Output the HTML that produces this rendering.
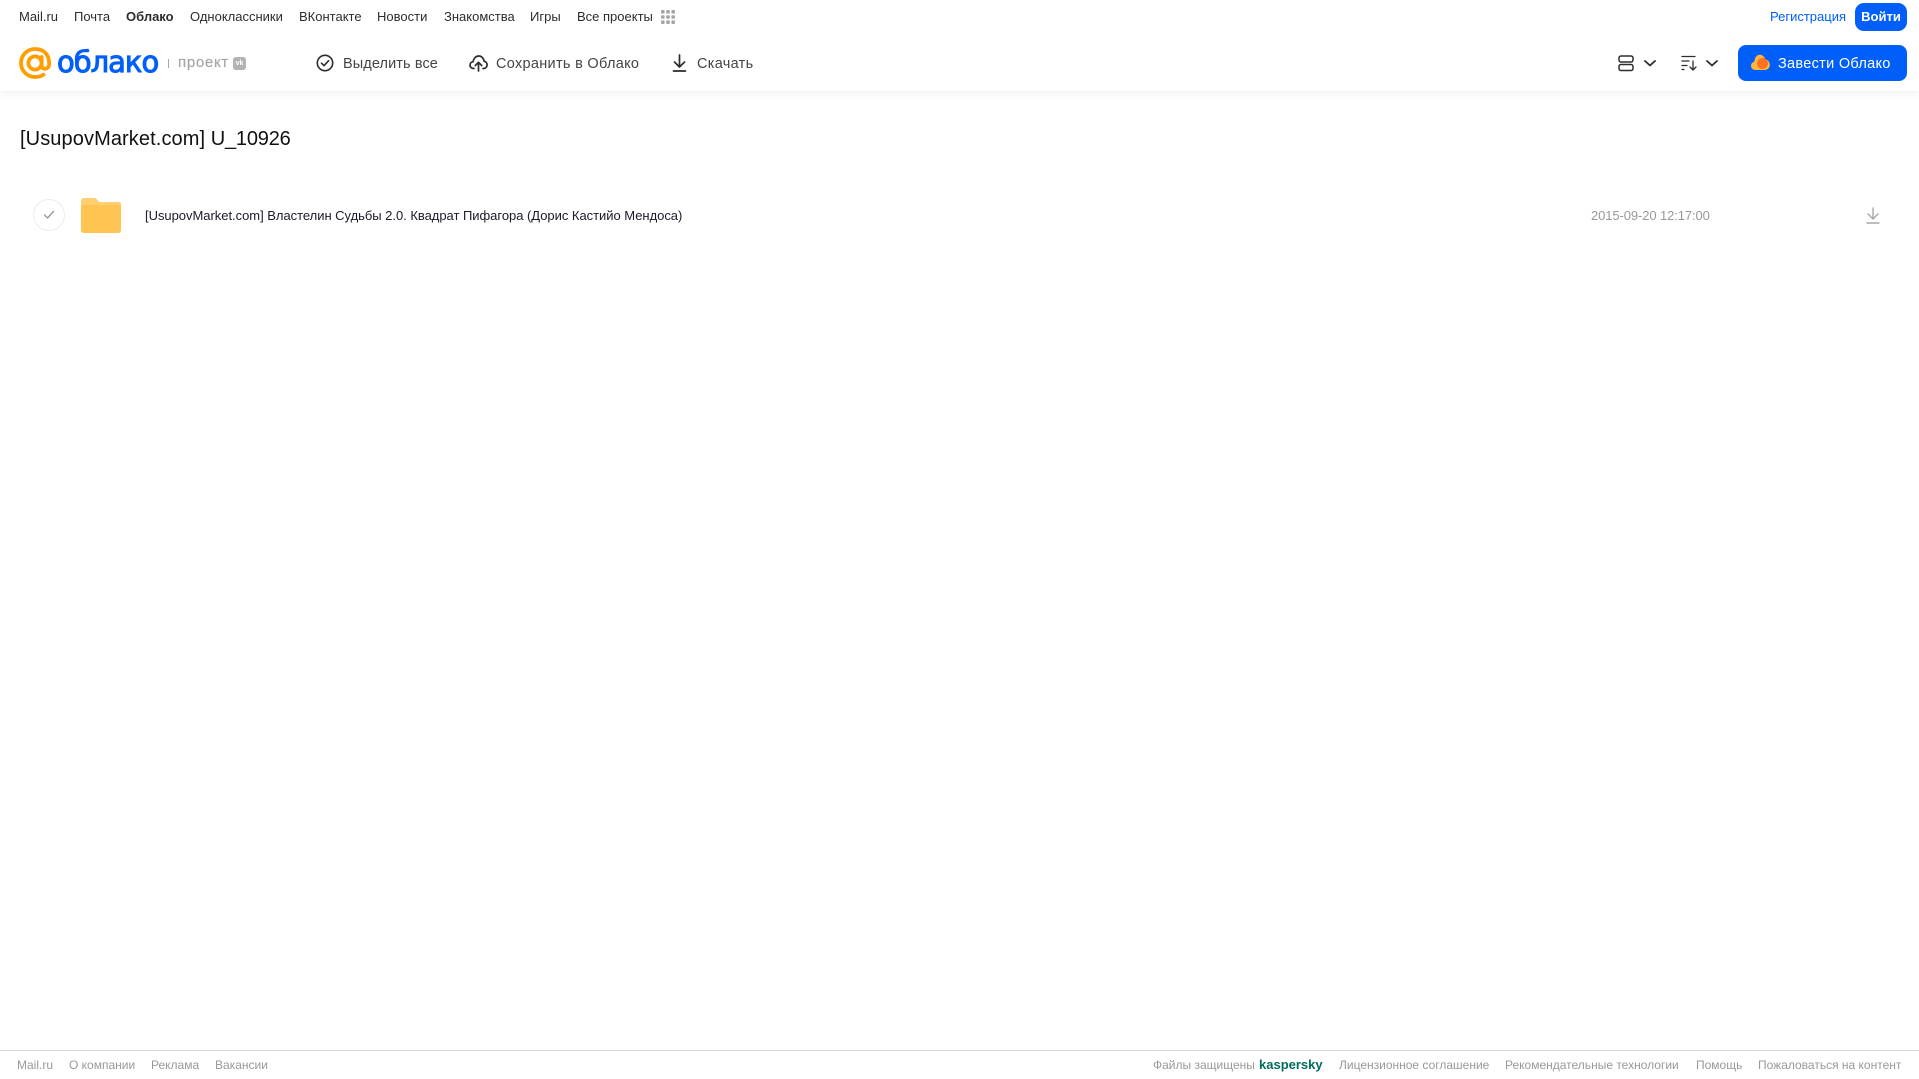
<!DOCTYPE html>
<html lang="ru"><head><meta charset="utf-8"><title>Облако</title>
<style>
html,body{margin:0;padding:0;background:#fff;width:1919px;height:1079px;overflow:hidden}
body{position:relative;font-family:"Liberation Sans",Arial,sans-serif}
.t{position:absolute;white-space:nowrap;line-height:20px;transform-origin:left center}
.n{font-size:13px;color:#2c2d2e;top:7px}
.h{font-size:14.5px;color:#444;top:54px;letter-spacing:.3px}
.f{font-size:12px;color:#999;top:1055px}
svg{position:absolute;overflow:visible}
</style></head><body>
<div style="position:absolute;left:0;top:0;width:1919px;height:91px;background:#fff;box-shadow:0 2px 8px rgba(0,0,0,.07)"></div>

<span class="t n" style="left:19px">Mail.ru</span>
<span class="t n" style="left:74px">Почта</span>
<span class="t n" style="left:126px;font-weight:bold">Облако</span>
<span class="t n" style="left:190px">Одноклассники</span>
<span class="t n" style="left:299px">ВКонтакте</span>
<span class="t n" style="left:377px">Новости</span>
<span class="t n" style="left:444px">Знакомства</span>
<span class="t n" style="left:530px">Игры</span>
<span class="t n" style="left:577px">Все проекты</span>
<svg style="left:661px;top:10px" width="14" height="14" fill="#a5a5a5"><rect x="0" y="0" width="3.6" height="3.6" rx="1"/><rect x="5.2" y="0" width="3.6" height="3.6" rx="1"/><rect x="10.4" y="0" width="3.6" height="3.6" rx="1"/><rect x="0" y="5.2" width="3.6" height="3.6" rx="1"/><rect x="5.2" y="5.2" width="3.6" height="3.6" rx="1"/><rect x="10.4" y="5.2" width="3.6" height="3.6" rx="1"/><rect x="0" y="10.4" width="3.6" height="3.6" rx="1"/><rect x="5.2" y="10.4" width="3.6" height="3.6" rx="1"/><rect x="10.4" y="10.4" width="3.6" height="3.6" rx="1"/></svg>

<svg style="left:19px;top:47px" width="33" height="33" fill="none" stroke="#ff9e00" stroke-width="3.8"><circle cx="16" cy="16" r="6.6"/><path d="M22.6 10v8.500c0 4.600 7.600 4.600 7.600-1.500C30.200 7.500 25 2 16 2 8 2 2 8.500 2 16s6 14 14 14c3.500 0 6.200-.8 8.500-2.300" stroke-linecap="round"/></svg>
<span class="t" style="left:57px;top:48px;font-size:29px;line-height:28px;font-family:'DejaVu Sans',sans-serif;color:#005ff9;-webkit-text-stroke:1px #005ff9;letter-spacing:-1px">облако</span>
<div style="position:absolute;left:168px;top:59px;width:1px;height:9px;background:#aaa"></div>
<span class="t" style="left:178px;top:53px;font-size:15px;color:#a6a6a6;letter-spacing:.7px;-webkit-text-stroke:.2px #a6a6a6">проект</span>
<div style="position:absolute;left:233px;top:57px;width:13px;height:13px;border-radius:3px;background:#b3b3b3;color:#fff;font-size:7px;line-height:13px;text-align:center;font-weight:bold">vk</div>

<svg style="left:316px;top:54px" width="18" height="18" fill="none" stroke="#2c2d2e" stroke-width="1.600"><circle cx="9" cy="9" r="7.700"/><path d="M5.500 9.200l2.500 2.500 4.600-5" stroke-linecap="round" stroke-linejoin="round"/></svg>
<span class="t h" style="left:343px;letter-spacing:.1px">Выделить все</span>
<svg style="left:469px;top:54px" width="19" height="18" fill="none" stroke="#2c2d2e" stroke-width="1.700" stroke-linecap="round" stroke-linejoin="round"><path d="M5 14.500H4.500C2.500 14.500 1 13 1 11.200 1 9.300 2.300 8 4 7.800 4.500 4.500 6.800 2 9.700 2c2.900 0 5 2.200 5.400 5.300 1.800.3 3 1.900 3 3.700 0 1.900-1.500 3.500-3.500 3.500H14"/><path d="M9.500 17V8.500M6.300 11.500l3.200-3.200 3.200 3.200"/></svg>
<span class="t h" style="left:496px">Сохранить в Облако</span>
<svg style="left:672px;top:54px" width="15" height="18" fill="none" stroke="#2c2d2e" stroke-width="1.700" stroke-linecap="round" stroke-linejoin="round"><path d="M7.500 1v11.500M2.500 8l5 5 5-5M1.500 17h12"/></svg>
<span class="t h" style="left:697px">Скачать</span>

<span class="t n" style="left:1770px;color:#005ff9">Регистрация</span>
<div style="position:absolute;left:1855px;top:3px;width:52px;height:28px;border-radius:9px;background:#005ff9;color:#fff;font-size:13px;font-weight:bold;line-height:28px;text-align:center">Войти</div>
<svg style="left:1618px;top:55px" width="40" height="16" fill="none" stroke="#2c2d2e" stroke-width="1.500"><rect x="1" y="1" width="14" height="6" rx="2"/><rect x="1" y="9.500" width="14" height="6" rx="2"/><path d="M27 6l5 4.500 5-4.500" stroke-width="1.800" stroke-linecap="round" stroke-linejoin="round"/></svg>
<svg style="left:1681px;top:55px" width="40" height="16" fill="none" stroke="#2c2d2e" stroke-width="1.300" stroke-linecap="round" stroke-linejoin="round"><path d="M1 1.500h13M1 6h7M1 10.500h5M1 14.500h2"/><path d="M12 6v9M9 12l3 3 3-3"/><path d="M26 6l5 4.500 5-4.500" stroke-width="1.800"/></svg>
<div style="position:absolute;left:1738px;top:45px;width:169px;height:36px;border-radius:8px;background:#005ff9"></div>
<svg style="left:1751px;top:54px" width="19" height="17"><path d="M4.500 16C1.800 16 0 14.200 0 11.800 0 9.700 1.400 8.200 3.300 7.900 3.600 3.800 5.700.8 8.800.8c2.800 0 4.700 2 5.200 4.500 2.800.4 4.800 2.700 4.800 5.500 0 3-2.200 5.200-5 5.200z" fill="#ffb43c"/><circle cx="11.500" cy="9.500" r="5.500" fill="#ff6a1f" opacity=".9"/></svg>
<span class="t h" style="left:1778px;color:#fff">Завести Облако</span>

<span class="t" style="left:20px;top:127px;font-size:20px;line-height:24px;color:#111"><span style="letter-spacing:.1px">[UsupovMarket.com]</span> <span style="letter-spacing:-.2px">U_10926</span></span>

<div style="position:absolute;left:33px;top:199px;width:30px;height:30px;border:1px solid #ececec;border-radius:50%"></div>
<svg style="left:43px;top:210px" width="12" height="10" fill="none" stroke="#999" stroke-width="1.400" stroke-linecap="round" stroke-linejoin="round"><path d="M1.500 5l3 3 6-6.500"/></svg>
<svg style="left:81px;top:198px" width="40" height="35"><path d="M3 0h10c1.500 0 2.300.6 3.200 1.700L18.500 4H38c1.100 0 2 .9 2 2v26c0 1.600-1.300 3-3 3H3c-1.700 0-3-1.400-3-3V3c0-1.700 1.300-3 3-3z" fill="#ffcf70"/><path d="M0 9.500C0 8 1 7 2.500 7H38c1.100 0 2 .9 2 2v23c0 1.600-1.300 3-3 3H3c-1.700 0-3-1.400-3-3z" fill="#ffc452"/></svg>
<span class="t" style="left:145px;top:206px;font-size:13px;color:#1a1a2a;letter-spacing:-.03px">[UsupovMarket.com] Властелин Судьбы 2.0. Квадрат Пифагора (Дорис Кастийо Мендоса)</span>
<span class="t" style="left:1591px;top:206px;font-size:13px;color:#999;letter-spacing:-.1px">2015-09-20 12:17:00</span>
<svg style="left:1866px;top:207px" width="14" height="17" fill="none" stroke="#a8a8a8" stroke-width="1.400" stroke-linecap="round" stroke-linejoin="round"><path d="M7 1v10.500M2 7l5 5 5-5M1 16h12"/></svg>

<div style="position:absolute;left:0;top:1050px;width:1919px;height:1px;background:#d8d8d8"></div>
<span class="t f" style="left:17px">Mail.ru</span>
<span class="t f" style="left:69px">О компании</span>
<span class="t f" style="left:151px">Реклама</span>
<span class="t f" style="left:215px">Вакансии</span>
<span class="t f" style="left:1153px">Файлы защищены</span>
<span class="t f" style="left:1259px;font-weight:bold;font-size:13px;color:#006d5c">kaspersky</span>
<span class="t f" style="left:1339px">Лицензионное соглашение</span>
<span class="t f" style="left:1505px">Рекомендательные технологии</span>
<span class="t f" style="left:1696px">Помощь</span>
<span class="t f" style="left:1758px">Пожаловаться на контент</span>
</body></html>
